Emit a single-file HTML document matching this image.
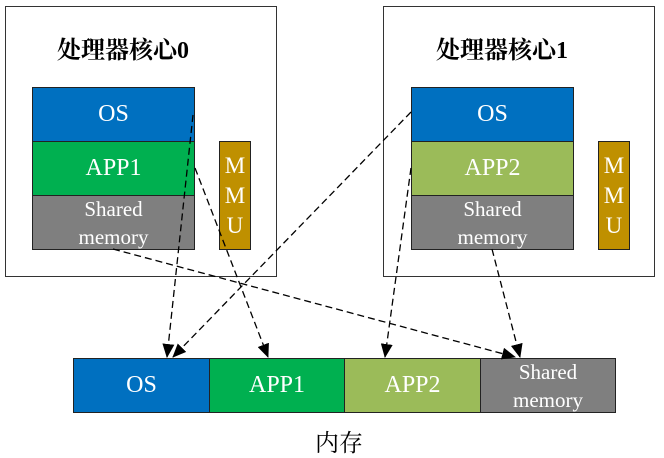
<!DOCTYPE html>
<html><head><meta charset="utf-8"><style>
body{margin:0;width:664px;height:455px;background:#fff;position:relative;overflow:hidden;font-family:"Liberation Serif","Noto Serif CJK SC",serif}
.b{position:absolute;box-sizing:border-box;border:1px solid #222;color:#fff;display:flex;align-items:center;justify-content:center;text-align:center;font-size:24px}
.s{font-size:21px;line-height:28px}
.m{font-size:23px;line-height:30px}
.t{position:absolute;font-size:24px;font-weight:bold;color:#000}
</style></head><body>
<div class="b" style="left:5px;top:6px;width:272px;height:271px;border-color:#333"></div>
<div class="b" style="left:383px;top:6px;width:272px;height:271px;border-color:#333"></div>
<div class="t" style="left:57px;top:30px">处理器核心0</div>
<div class="t" style="left:436px;top:30px">处理器核心1</div>

<div class="b" style="left:32px;top:87px;width:163px;height:55px;background:#0070c0">OS</div>
<div class="b" style="left:32px;top:141px;width:163px;height:55px;background:#00b050">APP1</div>
<div class="b s" style="left:32px;top:195px;width:163px;height:55px;background:#7f7f7f">Shared<br>memory</div>
<div class="b m" style="left:219px;top:141px;width:32px;height:109px;background:#bf9000">M<br>M<br>U</div>

<div class="b" style="left:411px;top:87px;width:163px;height:55px;background:#0070c0">OS</div>
<div class="b" style="left:411px;top:141px;width:163px;height:55px;background:#9bbb59">APP2</div>
<div class="b s" style="left:411px;top:195px;width:163px;height:55px;background:#7f7f7f">Shared<br>memory</div>
<div class="b m" style="left:598px;top:141px;width:32px;height:109px;background:#bf9000">M<br>M<br>U</div>

<div class="b" style="left:73px;top:358px;width:137px;height:55px;background:#0070c0">OS</div>
<div class="b" style="left:209px;top:358px;width:136px;height:55px;background:#00b050">APP1</div>
<div class="b" style="left:344px;top:358px;width:137px;height:55px;background:#9bbb59">APP2</div>
<div class="b s" style="left:480px;top:358px;width:136px;height:55px;background:#7f7f7f">Shared<br>memory</div>
<div style="position:absolute;left:315px;top:423px;font-size:24px;color:#000">内存</div>

<svg width="664" height="455" style="position:absolute;left:0;top:0">
<defs><marker id="a" markerWidth="14" markerHeight="12" refX="13" refY="6" orient="auto" markerUnits="userSpaceOnUse"><path d="M0,0 L14,6 L0,12 z" fill="#000"/></marker></defs>
<g stroke="#000" stroke-width="1.3" stroke-dasharray="7,4" fill="none">
<line x1="193" y1="115" x2="167" y2="357" marker-end="url(#a)"/>
<line x1="195" y1="168" x2="268" y2="357" marker-end="url(#a)"/>
<line x1="113" y1="249" x2="515" y2="357" marker-end="url(#a)"/>
<line x1="411" y1="112" x2="173" y2="357" marker-end="url(#a)"/>
<line x1="411" y1="168" x2="385" y2="357" marker-end="url(#a)"/>
<line x1="492" y1="249" x2="520" y2="357" marker-end="url(#a)"/>
</g></svg>
</body></html>
